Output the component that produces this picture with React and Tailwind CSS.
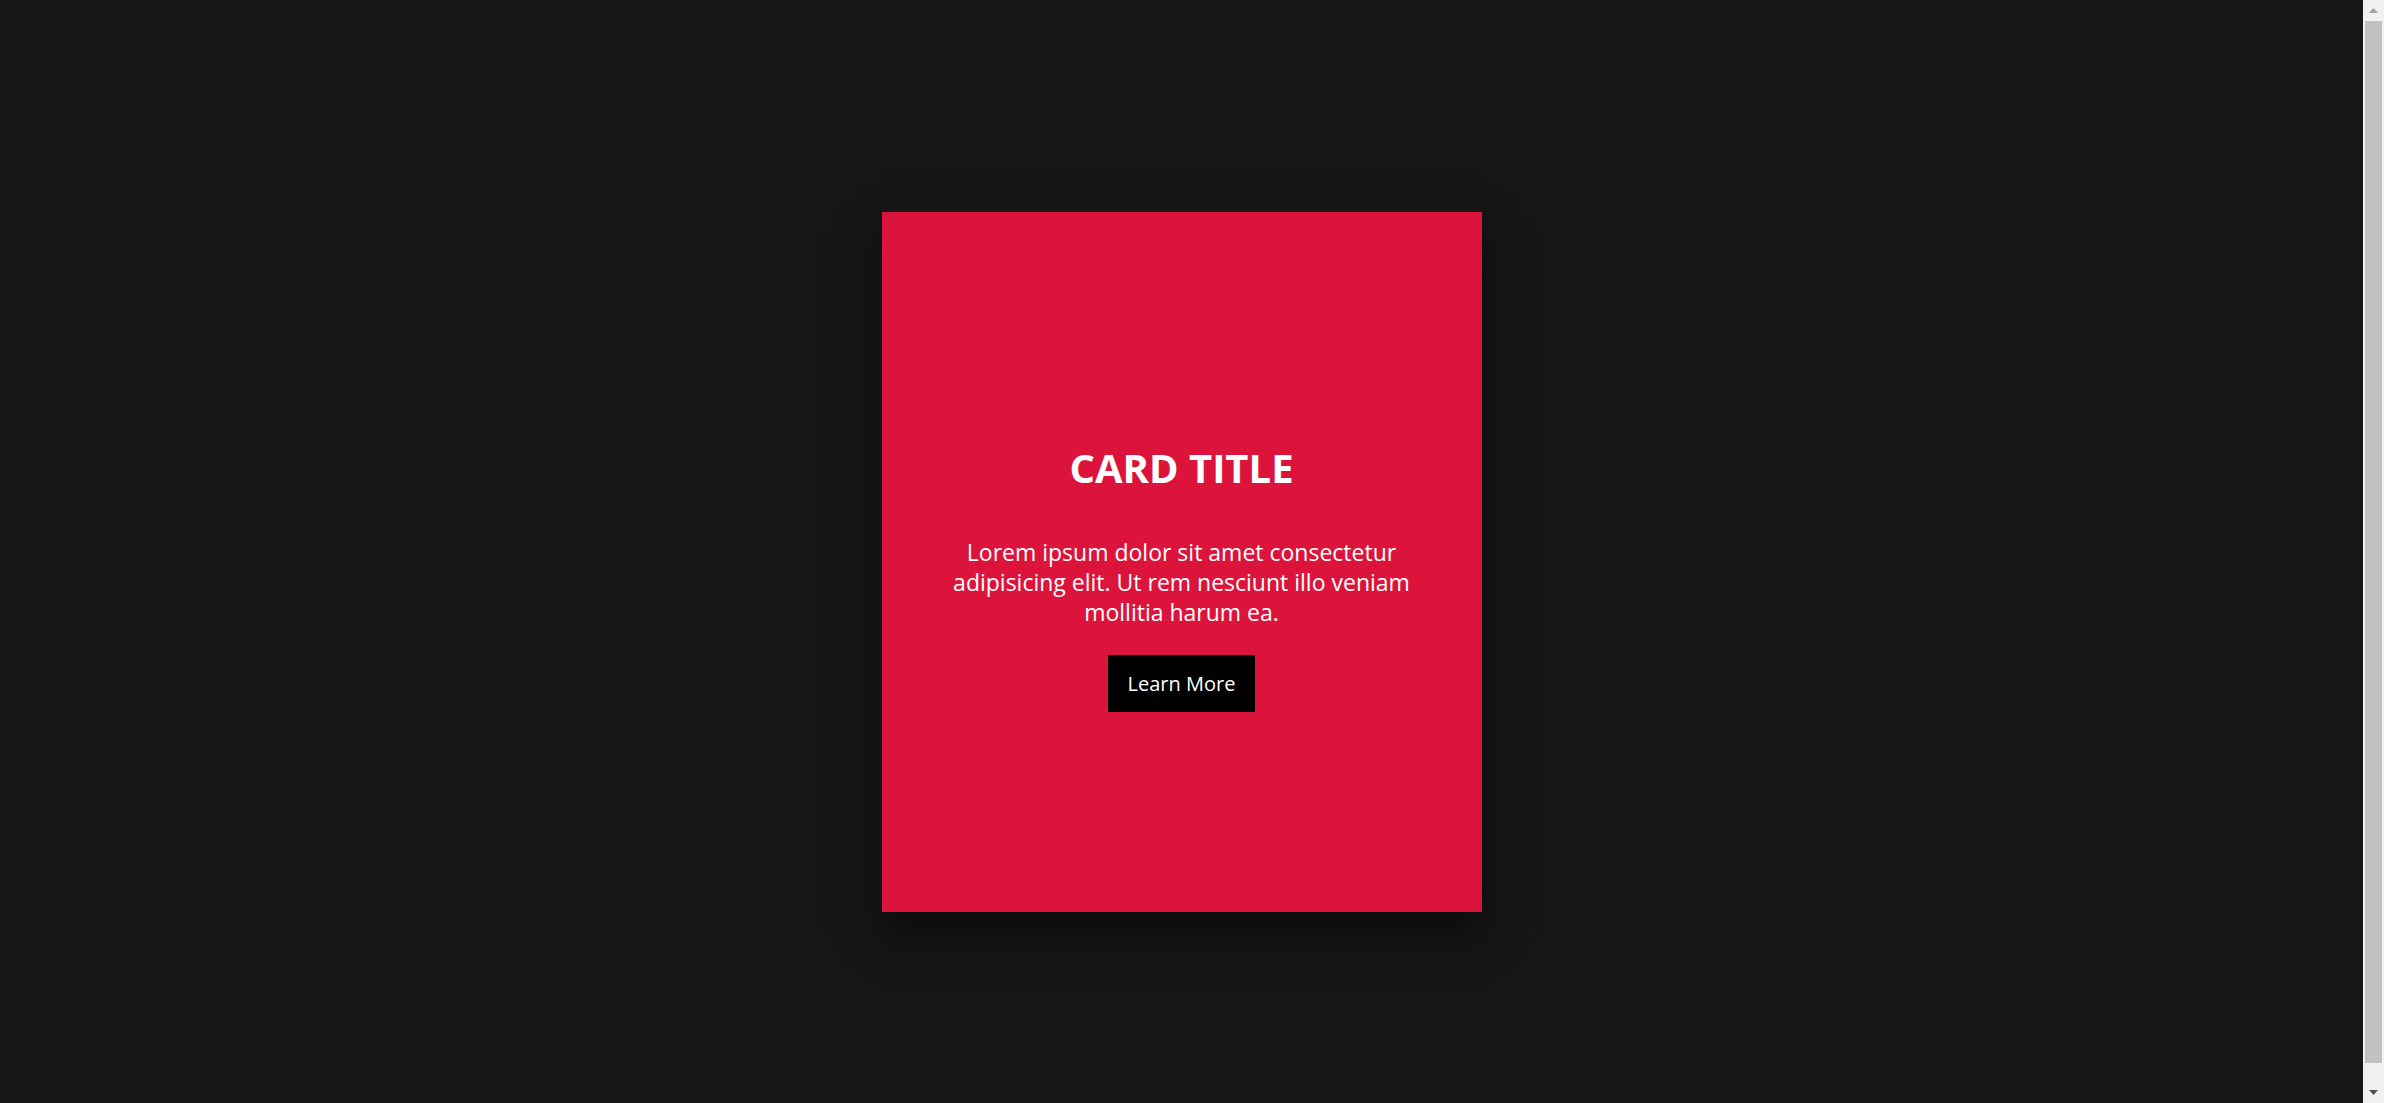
import React from "react";

/* ─── Fake classic scrollbar (page is 20px taller than the viewport) ─── */
function Scrollbar() {
  return (
    <div className="w-[21px] shrink-0 h-screen bg-[#f1f1f1] flex flex-col">
      <div className="h-[21px] flex items-center justify-center">
        <svg width="9" height="5" viewBox="0 0 9 5">
          <polygon points="4.5,0 9,5 0,5" fill="#a3a3a3" />
        </svg>
      </div>
      <div className="h-[1042px] mx-[2px] bg-[#c1c1c1]" />
      <div className="flex-1" />
      <div className="h-[21px] flex items-center justify-center">
        <svg width="9" height="5" viewBox="0 0 9 5">
          <polygon points="0,0 9,0 4.5,5" fill="#505050" />
        </svg>
      </div>
    </div>
  );
}

export default function App() {
  return (
    <div className="flex h-screen w-full overflow-hidden bg-[#161616] font-['Open_Sans',sans-serif]">
      <main className="flex-1 h-screen overflow-hidden">
        <div className="h-[1123px] flex items-center justify-center">
          {/* ── Card ── */}
          <div className="w-[600px] h-[700px] bg-[#dc143c] shadow-[0_20px_40px_rgba(0,0,0,0.55)] flex flex-col items-center justify-center pt-[32px] text-white text-center">
            <h2 className="text-[40px] leading-[48px] font-bold">CARD TITLE</h2>
            <p className="mt-[45px] text-[23px] leading-[30px] whitespace-nowrap">
              Lorem ipsum dolor sit amet consectetur
              <br />
              adipisicing elit. Ut rem nesciunt illo veniam
              <br />
              mollitia harum ea.
            </p>
            <button className="mt-[28px] bg-black text-white text-[20px] leading-[27px] px-[20px] py-[15px]">
              Learn More
            </button>
          </div>
        </div>
      </main>
      <Scrollbar />
    </div>
  );
}
